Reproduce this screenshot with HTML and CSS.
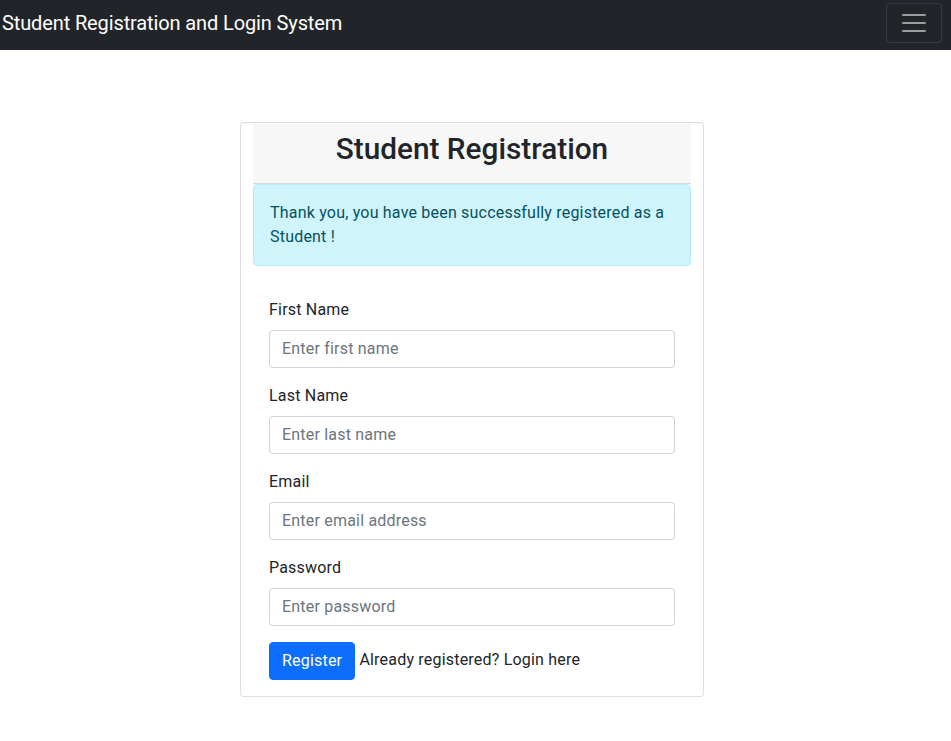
FILE: index.html
```html
<!DOCTYPE html>
<html lang="en">
<head>
<meta charset="utf-8">
<title>Student Registration and Login System</title>
<link rel="stylesheet" href="styles.css">
</head>
<body>
<nav class="navbar">
  <a class="brand" href="#">Student Registration and Login System</a>
  <button class="toggler" type="button" aria-label="Toggle navigation">
    <svg width="30" height="30" viewBox="0 0 30 30" aria-hidden="true"><path d="M4 7h22M4 15h22M4 23h22" stroke="rgba(255,255,255,0.55)" stroke-width="2" stroke-linecap="round" stroke-miterlimit="10"/></svg>
  </button>
</nav>
<main class="page">
  <div class="card">
    <div class="card-inner">
      <div class="card-header"><h2 class="title">Student Registration</h2></div>
      <div class="alert">Thank you, you have been successfully registered as a Student !</div>
      <form class="card-body">
        <div class="field">
          <label class="label" for="fn">First Name</label>
          <input class="input" id="fn" type="text" placeholder="Enter first name">
        </div>
        <div class="field">
          <label class="label" for="ln">Last Name</label>
          <input class="input" id="ln" type="text" placeholder="Enter last name">
        </div>
        <div class="field">
          <label class="label" for="em">Email</label>
          <input class="input" id="em" type="email" placeholder="Enter email address">
        </div>
        <div class="field">
          <label class="label" for="pw">Password</label>
          <input class="input" id="pw" type="password" placeholder="Enter password">
        </div>
        <div class="actions">
          <button class="btn" type="submit">Register</button> <span class="login">Already registered? <a href="#" class="login-link">Login here</a></span>
        </div>
      </form>
    </div>
  </div>
</main>
</body>
</html>
```
FILE: styles.css
```css
* { box-sizing: border-box; }
html, body { margin: 0; padding: 0; }
body {
  font-family: Roboto, "Liberation Sans", Arial, sans-serif;
  font-size: 16px;
  line-height: 1.5;
  letter-spacing: 0.2px;
  color: #212529;
  background: #fff;
}
.navbar {
  height: 50px;
  background: #212529;
  display: flex;
  align-items: center;
  justify-content: space-between;
  padding: 0 9px 5px 2px;
}
.brand {
  color: #fff;
  text-decoration: none;
  font-size: 20px;
  line-height: 30px;
  letter-spacing: -0.12px;
}
.toggler {
  width: 56px;
  height: 40px;
  padding: 4px 12px;
  background: transparent;
  border: 1px solid rgba(255,255,255,0.1);
  border-radius: 4px;
  display: flex;
  align-items: center;
  justify-content: center;
}
.toggler svg { display: block; }
.page { padding: 72px 0 40px 240px; }
.card {
  width: 464px;
  border: 1px solid rgba(0,0,0,0.125);
  border-radius: 4px;
  background: #fff;
}
.card-inner { padding: 0 12px; }
.card-header {
  background: rgba(0,0,0,0.03);
  padding: 8px 16px;
  border-bottom: 1px solid rgba(0,0,0,0.125);
  text-align: center;
}
.title {
  margin: 0 0 8px;
  font-size: 29.76px;
  line-height: 1.2;
  font-weight: 500;
  letter-spacing: 0;
}
.alert {
  background: #cff4fc;
  border: 1px solid #b6effb;
  color: #055160;
  border-radius: 4px;
  padding: 16px;
  margin-bottom: 16px;
}
.card-body { padding: 16px; }
.field { margin-bottom: 16px; }
.label { display: block; margin-bottom: 8px; }
.input {
  display: block;
  width: 100%;
  height: 38px;
  padding: 6px 12px;
  font: inherit;
  letter-spacing: 0.2px;
  color: #212529;
  border: 1px solid #ced4da;
  border-radius: 4px;
  background: #fff;
}
.input::placeholder { color: #6c757d; opacity: 1; }
.btn {
  font: inherit;
  letter-spacing: 0.2px;
  color: #fff;
  background: #0d6efd;
  border: 1px solid #0d6efd;
  border-radius: 4px;
  padding: 6px 12px;
  line-height: 1.5;
  vertical-align: middle;
  cursor: pointer;
}
.login-link { color: inherit; text-decoration: none; }
```
